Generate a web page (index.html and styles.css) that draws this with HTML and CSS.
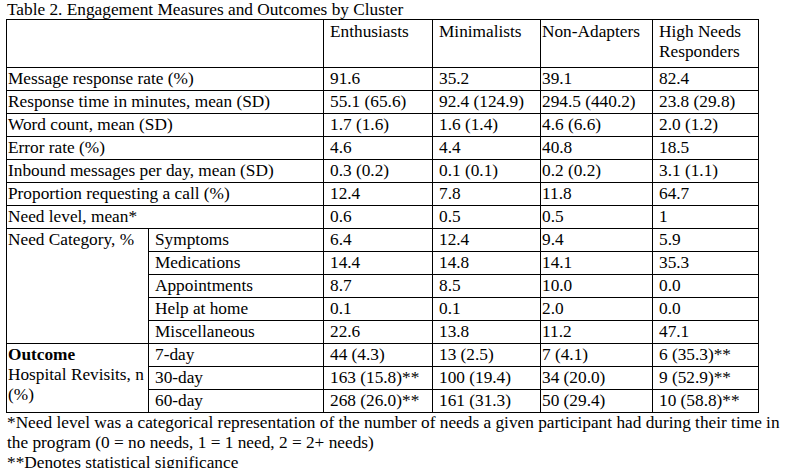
FILE: index.html
```html
<!DOCTYPE html>
<html lang="en">
<head>
<meta charset="utf-8">
<title>Table 2</title>
<link rel="stylesheet" href="styles.css">
</head>
<body>
<div class="page">
  <div class="caption">Table 2. Engagement Measures and Outcomes by Cluster</div>
  <table class="data">
    <colgroup>
      <col class="c-label">
      <col class="c-sub">
      <col class="c-enth">
      <col class="c-min">
      <col class="c-non">
      <col class="c-high">
    </colgroup>
    <thead>
      <tr class="head">
        <th colspan="2"></th>
        <th class="pad">Enthusiasts</th>
        <th class="pad">Minimalists</th>
        <th class="tight">Non-Adapters</th>
        <th class="pad">High Needs Responders</th>
      </tr>
    </thead>
    <tbody>
      <tr><td colspan="2">Message response rate (%)</td><td class="pad">91.6</td><td class="pad">35.2</td><td class="tight">39.1</td><td class="pad">82.4</td></tr>
      <tr><td colspan="2">Response time in minutes, mean (SD)</td><td class="pad">55.1 (65.6)</td><td class="pad">92.4 (124.9)</td><td class="tight">294.5 (440.2)</td><td class="pad">23.8 (29.8)</td></tr>
      <tr><td colspan="2">Word count, mean (SD)</td><td class="pad">1.7 (1.6)</td><td class="pad">1.6 (1.4)</td><td class="tight">4.6 (6.6)</td><td class="pad">2.0 (1.2)</td></tr>
      <tr><td colspan="2">Error rate (%)</td><td class="pad">4.6</td><td class="pad">4.4</td><td class="tight">40.8</td><td class="pad">18.5</td></tr>
      <tr><td colspan="2">Inbound messages per day, mean (SD)</td><td class="pad">0.3 (0.2)</td><td class="pad">0.1 (0.1)</td><td class="tight">0.2 (0.2)</td><td class="pad">3.1 (1.1)</td></tr>
      <tr><td colspan="2">Proportion requesting a call (%)</td><td class="pad">12.4</td><td class="pad">7.8</td><td class="tight">11.8</td><td class="pad">64.7</td></tr>
      <tr><td colspan="2">Need level, mean*</td><td class="pad">0.6</td><td class="pad">0.5</td><td class="tight">0.5</td><td class="pad">1</td></tr>
      <tr><td rowspan="5" class="group">Need Category, %</td><td class="sub">Symptoms</td><td class="pad">6.4</td><td class="pad">12.4</td><td class="tight">9.4</td><td class="pad">5.9</td></tr>
      <tr><td class="sub">Medications</td><td class="pad">14.4</td><td class="pad">14.8</td><td class="tight">14.1</td><td class="pad">35.3</td></tr>
      <tr><td class="sub">Appointments</td><td class="pad">8.7</td><td class="pad">8.5</td><td class="tight">10.0</td><td class="pad">0.0</td></tr>
      <tr><td class="sub">Help at home</td><td class="pad">0.1</td><td class="pad">0.1</td><td class="tight">2.0</td><td class="pad">0.0</td></tr>
      <tr><td class="sub">Miscellaneous</td><td class="pad">22.6</td><td class="pad">13.8</td><td class="tight">11.2</td><td class="pad">47.1</td></tr>
      <tr><td rowspan="3" class="group"><strong>Outcome</strong><br>Hospital Revisits, n (%)</td><td class="sub">7-day</td><td class="pad">44 (4.3)</td><td class="pad">13 (2.5)</td><td class="tight">7 (4.1)</td><td class="pad">6 (35.3)**</td></tr>
      <tr><td class="sub">30-day</td><td class="pad">163 (15.8)**</td><td class="pad">100 (19.4)</td><td class="tight">34 (20.0)</td><td class="pad">9 (52.9)**</td></tr>
      <tr><td class="sub">60-day</td><td class="pad">268 (26.0)**</td><td class="pad">161 (31.3)</td><td class="tight">50 (29.4)</td><td class="pad">10 (58.8)**</td></tr>
    </tbody>
  </table>
  <p class="note">*Need level was a categorical representation of the number of needs a given participant had during their time in the program (0 = no needs, 1 = 1 need, 2 = 2+ needs)</p>
  <p class="note">**Denotes statistical significance</p>
</div>
</body>
</html>
```

FILE: styles.css
```css
html, body {
  margin: 0;
  padding: 0;
  background: #ffffff;
}

body {
  font-family: "Liberation Serif", "Times New Roman", serif;
  font-size: 17.3px;
  color: #000000;
}

.page {
  padding: 0 0 0 6px;
  width: 787px;
}

.caption {
  line-height: 19px;
  padding-left: 1px;
}

.data {
  border-collapse: collapse;
  table-layout: fixed;
  width: 752px;
  border: 1px solid #000;
}

.c-label { width: 142px; }
.c-sub { width: 175px; }
.c-enth { width: 109px; }
.c-min { width: 108px; }
.c-non { width: 112px; }
.c-high { width: 106px; }

.data th,
.data td {
  border: 1px solid #000;
  line-height: 20px;
  padding: 1px 0 1px 1px;
  text-align: left;
  vertical-align: top;
  font-weight: normal;
  white-space: nowrap;
}

.data .head th {
  height: 44px;
  padding-top: 2px;
  white-space: normal;
}

.data td.group {
  white-space: normal;
  padding-right: 0;
}

.data td.pad,
.data th.pad,
.data td.sub {
  padding-left: 6px;
}

.data td.tight,
.data th.tight {
  padding-left: 1px;
}

.note {
  margin: 0;
  line-height: 20px;
  padding-left: 1px;
}
```
